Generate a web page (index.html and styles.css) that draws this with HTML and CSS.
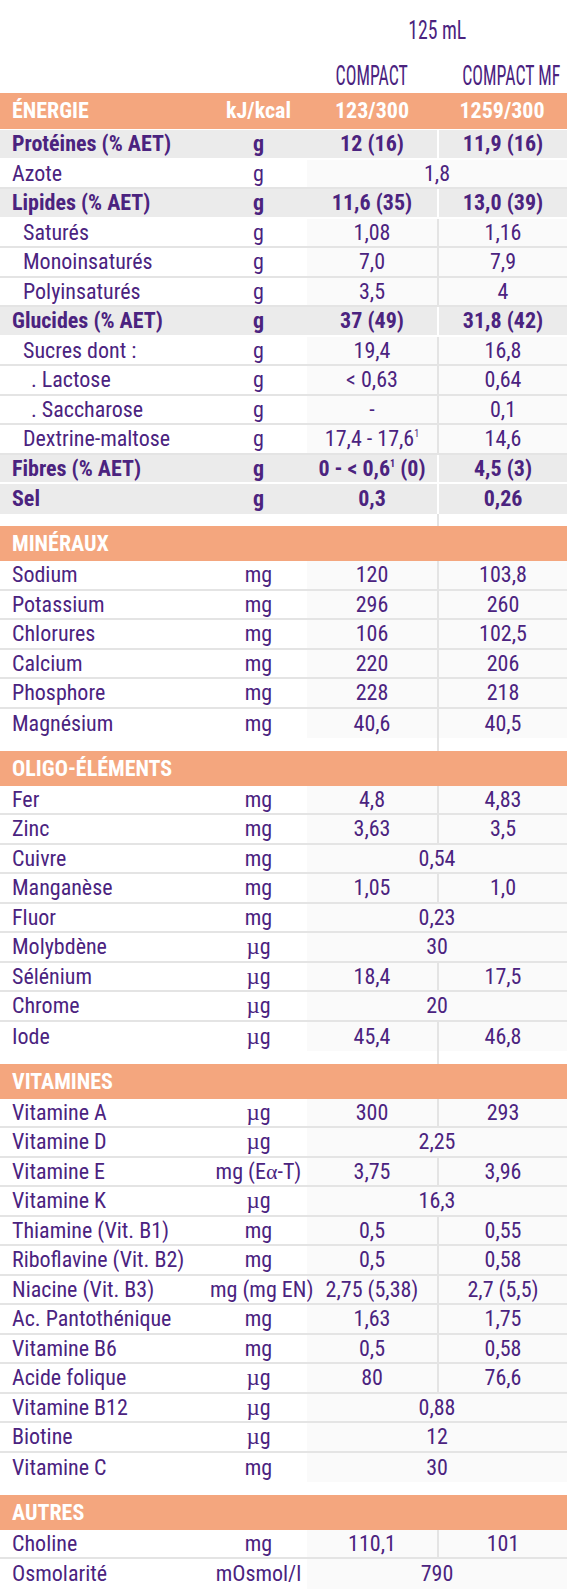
FILE: index.html
```html
<!DOCTYPE html>
<html lang="fr">
<head>
<meta charset="utf-8">
<title>Composition</title>
<link rel="stylesheet" href="styles.css">
</head>
<body>
<div class="sheet">
  <div class="head">
    <div class="vol"><span class="sxv">125 mL</span></div>
    <div class="names">
      <div class="nm"><span class="sxn">COMPACT</span></div>
      <div class="nm"><span class="sxn">COMPACT MF</span></div>
    </div>
  </div>

  <div class="energy">
    <div class="lbl">ÉNERGIE</div><div class="unit">kJ/kcal</div><div class="c">123/300</div><div class="c">1259/300</div>
  </div>

  <div class="group">
    <div class="row b"><div class="lbl">Protéines (% AET)</div><div class="unit">g</div><div class="v1">12 (16)</div><div class="v2">11,9 (16)</div></div>
    <div class="row"><div class="lbl">Azote</div><div class="unit">g</div><div class="vm">1,8</div></div>
    <div class="row b"><div class="lbl">Lipides (% AET)</div><div class="unit">g</div><div class="v1">11,6 (35)</div><div class="v2">13,0 (39)</div></div>
    <div class="row"><div class="lbl i1">Saturés</div><div class="unit">g</div><div class="v1">1,08</div><div class="v2">1,16</div></div>
    <div class="row"><div class="lbl i1">Monoinsaturés</div><div class="unit">g</div><div class="v1">7,0</div><div class="v2">7,9</div></div>
    <div class="row"><div class="lbl i1">Polyinsaturés</div><div class="unit">g</div><div class="v1">3,5</div><div class="v2">4</div></div>
    <div class="row b"><div class="lbl">Glucides (% AET)</div><div class="unit">g</div><div class="v1">37 (49)</div><div class="v2">31,8 (42)</div></div>
    <div class="row"><div class="lbl i1">Sucres dont :</div><div class="unit">g</div><div class="v1">19,4</div><div class="v2">16,8</div></div>
    <div class="row"><div class="lbl i2">. Lactose</div><div class="unit">g</div><div class="v1">&lt; 0,63</div><div class="v2">0,64</div></div>
    <div class="row"><div class="lbl i2">. Saccharose</div><div class="unit">g</div><div class="v1">-</div><div class="v2">0,1</div></div>
    <div class="row"><div class="lbl i1">Dextrine-maltose</div><div class="unit">g</div><div class="v1">17,4 - 17,6<sup class="fn">1</sup></div><div class="v2">14,6</div></div>
    <div class="row b"><div class="lbl">Fibres (% AET)</div><div class="unit">g</div><div class="v1">0 - &lt; 0,6<sup class="fn">1</sup> (0)</div><div class="v2">4,5 (3)</div></div>
    <div class="row b last"><div class="lbl">Sel</div><div class="unit">g</div><div class="v1">0,3</div><div class="v2">0,26</div></div>
    <div class="gap split"><div></div><div></div><div></div><div class="gd"></div></div>
  </div>

  <div class="band">MINÉRAUX</div>
  <div class="group">
    <div class="row"><div class="lbl">Sodium</div><div class="unit">mg</div><div class="v1">120</div><div class="v2">103,8</div></div>
    <div class="row"><div class="lbl">Potassium</div><div class="unit">mg</div><div class="v1">296</div><div class="v2">260</div></div>
    <div class="row"><div class="lbl">Chlorures</div><div class="unit">mg</div><div class="v1">106</div><div class="v2">102,5</div></div>
    <div class="row"><div class="lbl">Calcium</div><div class="unit">mg</div><div class="v1">220</div><div class="v2">206</div></div>
    <div class="row"><div class="lbl">Phosphore</div><div class="unit">mg</div><div class="v1">228</div><div class="v2">218</div></div>
    <div class="row last"><div class="lbl">Magnésium</div><div class="unit">mg</div><div class="v1">40,6</div><div class="v2">40,5</div></div>
    <div class="gap split"><div></div><div></div><div></div><div class="gd"></div></div>
  </div>

  <div class="band">OLIGO-ÉLÉMENTS</div>
  <div class="group">
    <div class="row"><div class="lbl">Fer</div><div class="unit">mg</div><div class="v1">4,8</div><div class="v2">4,83</div></div>
    <div class="row"><div class="lbl">Zinc</div><div class="unit">mg</div><div class="v1">3,63</div><div class="v2">3,5</div></div>
    <div class="row"><div class="lbl">Cuivre</div><div class="unit">mg</div><div class="vm">0,54</div></div>
    <div class="row"><div class="lbl">Manganèse</div><div class="unit">mg</div><div class="v1">1,05</div><div class="v2">1,0</div></div>
    <div class="row"><div class="lbl">Fluor</div><div class="unit">mg</div><div class="vm">0,23</div></div>
    <div class="row"><div class="lbl">Molybdène</div><div class="unit"><span class="mu">µ</span>g</div><div class="vm">30</div></div>
    <div class="row"><div class="lbl">Sélénium</div><div class="unit"><span class="mu">µ</span>g</div><div class="v1">18,4</div><div class="v2">17,5</div></div>
    <div class="row"><div class="lbl">Chrome</div><div class="unit"><span class="mu">µ</span>g</div><div class="vm">20</div></div>
    <div class="row last"><div class="lbl">Iode</div><div class="unit"><span class="mu">µ</span>g</div><div class="v1">45,4</div><div class="v2">46,8</div></div>
    <div class="gap split"><div></div><div></div><div></div><div class="gd"></div></div>
  </div>

  <div class="band">VITAMINES</div>
  <div class="group">
    <div class="row"><div class="lbl">Vitamine A</div><div class="unit"><span class="mu">µ</span>g</div><div class="v1">300</div><div class="v2">293</div></div>
    <div class="row"><div class="lbl">Vitamine D</div><div class="unit"><span class="mu">µ</span>g</div><div class="vm">2,25</div></div>
    <div class="row"><div class="lbl">Vitamine E</div><div class="unit">mg (E<span class="al">α</span>-T)</div><div class="v1">3,75</div><div class="v2">3,96</div></div>
    <div class="row"><div class="lbl">Vitamine K</div><div class="unit"><span class="mu">µ</span>g</div><div class="vm">16,3</div></div>
    <div class="row"><div class="lbl">Thiamine (Vit. B1)</div><div class="unit">mg</div><div class="v1">0,5</div><div class="v2">0,55</div></div>
    <div class="row"><div class="lbl">Riboflavine (Vit. B2)</div><div class="unit">mg</div><div class="v1">0,5</div><div class="v2">0,58</div></div>
    <div class="row"><div class="lbl">Niacine (Vit. B3)</div><div class="unit">mg (mg EN)</div><div class="v1">2,75 (5,38)</div><div class="v2">2,7 (5,5)</div></div>
    <div class="row"><div class="lbl">Ac. Pantothénique</div><div class="unit">mg</div><div class="v1">1,63</div><div class="v2">1,75</div></div>
    <div class="row"><div class="lbl">Vitamine B6</div><div class="unit">mg</div><div class="v1">0,5</div><div class="v2">0,58</div></div>
    <div class="row"><div class="lbl">Acide folique</div><div class="unit"><span class="mu">µ</span>g</div><div class="v1">80</div><div class="v2">76,6</div></div>
    <div class="row"><div class="lbl">Vitamine B12</div><div class="unit"><span class="mu">µ</span>g</div><div class="vm">0,88</div></div>
    <div class="row"><div class="lbl">Biotine</div><div class="unit"><span class="mu">µ</span>g</div><div class="vm">12</div></div>
    <div class="row last"><div class="lbl">Vitamine C</div><div class="unit">mg</div><div class="vm">30</div></div>
    <div class="gap"></div>
  </div>

  <div class="band">AUTRES</div>
  <div class="group">
    <div class="row"><div class="lbl">Choline</div><div class="unit">mg</div><div class="v1">110,1</div><div class="v2">101</div></div>
    <div class="row last"><div class="lbl">Osmolarité</div><div class="unit">mOsmol/l</div><div class="vm">790</div></div>
  </div>
</div>
</body>
</html>
```
FILE: styles.css
```css
html, body {
  margin: 0;
  padding: 0;
  background: #ffffff;
}

.sheet {
  width: 567px;
  font-family: "Liberation Sans Narrow", "Roboto Condensed", "DejaVu Sans Condensed", "Liberation Sans", sans-serif;
  font-stretch: condensed;
  font-size: 22px;
  color: #4b237f;
  white-space: nowrap;
}

.head {
  height: 93px;
}

.vol {
  margin-left: 307px;
  width: 260px;
  height: 60px;
  line-height: 60px;
  text-align: center;
}

.names {
  margin-left: 307px;
  display: grid;
  grid-template-columns: 130px 130px;
  height: 33px;
  line-height: 33px;
}

.nm {
  text-align: center;
}

.sxv {
  display: inline-block;
  font-size: 26px;
  transform: scaleX(0.76);
}

.sxn {
  display: inline-block;
  font-size: 27px;
  transform: scaleX(0.66);
}

.energy {
  display: grid;
  grid-template-columns: 210px 97px 130px 130px;
  height: 36px;
  line-height: 36px;
  margin-bottom: 1px;
  background: #f4a67e;
  color: #ffffff;
  font-weight: 700;
}

.energy .lbl {
  padding-left: 12px;
}

.energy .unit,
.energy .c {
  text-align: center;
}

.row {
  display: grid;
  grid-template-columns: 210px 97px 130px 130px;
  height: 29.5px;
  box-sizing: border-box;
  border-bottom: 2px solid #e4e4e4;
  line-height: 27.5px;
}

.row.last {
  border-bottom: 0;
  line-height: 29.5px;
}

.row.b {
  background: #ebebeb;
  border-bottom-color: #ffffff;
  font-weight: 700;
}

.lbl {
  padding-left: 12px;
}

.lbl.i1 {
  padding-left: 23px;
}

.lbl.i2 {
  padding-left: 31px;
}

.unit {
  text-align: center;
  position: relative;
  z-index: 1;
}

.v1,
.v2,
.vm {
  text-align: center;
  background: #fafafa;
}

.v2 {
  border-left: 2px solid #e4e4e4;
}

.vm {
  grid-column: span 2;
}

.row.b .v1,
.row.b .v2 {
  background: transparent;
}

.row.b .v2 {
  border-left-color: #ffffff;
}

.gap {
  height: 12.5px;
}

.gap.split {
  display: grid;
  grid-template-columns: 210px 97px 130px 130px;
}

.gd {
  border-left: 2px solid #e4e4e4;
}

.band {
  height: 35px;
  line-height: 35px;
  background: #f4a67e;
  color: #ffffff;
  font-weight: 700;
  font-size: 22px;
  padding-left: 12px;
}

.fn {
  font-size: 10px;
  line-height: 0;
  vertical-align: 9px;
}

.mu {
  font-family: "Liberation Serif", serif;
  font-size: 23px;
}

.al {
  font-family: "Liberation Serif", serif;
}
```
